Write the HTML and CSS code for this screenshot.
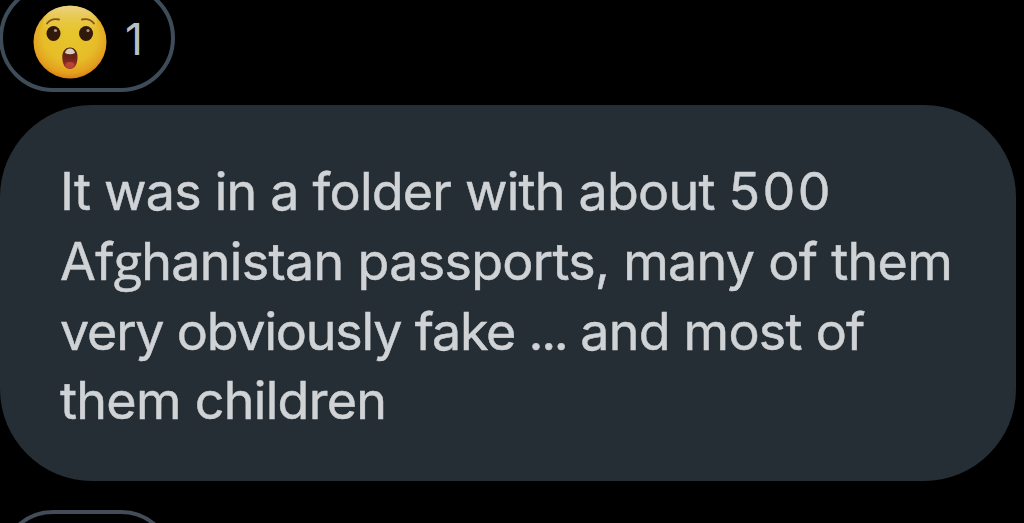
FILE: index.html
```
<!DOCTYPE html>
<html lang="en">
<head>
  <meta charset="UTF-8" />
  <meta name="viewport" content="width=device-width, initial-scale=1.0"/>
  <title>Messages</title>
  <link rel="stylesheet" href="styles.css">
</head>
<body>
  <div class="thread">
    <div class="reaction">
      <svg class="emoji" viewBox="0 0 74 74">
        <defs>
          <radialGradient id="face" cx="50%" cy="40%" r="62%">
            <stop offset="0" stop-color="#e6c62c"/>
            <stop offset="0.6" stop-color="#e6bd28"/>
            <stop offset="0.85" stop-color="#e3a01f"/>
            <stop offset="1" stop-color="#d9780f"/>
          </radialGradient>
          <linearGradient id="shine" x1="0" y1="0" x2="0" y2="1">
            <stop offset="0" stop-color="#ecd592" stop-opacity="0.9"/>
            <stop offset="1" stop-color="#e6c62c" stop-opacity="0"/>
          </linearGradient>
          <linearGradient id="mouth" x1="0" y1="0" x2="0" y2="1">
            <stop offset="0" stop-color="#4a2110"/>
            <stop offset="0.5" stop-color="#6d2418"/>
            <stop offset="1" stop-color="#a8362a"/>
          </linearGradient>
        </defs>
        <circle cx="37" cy="37" r="36.5" fill="url(#face)"/>
        <ellipse cx="37" cy="17" rx="27" ry="16" fill="url(#shine)"/>
        <path d="M14 18.5Q18 13 26 14.500" fill="none" stroke="#80551a" stroke-width="1.8" stroke-linecap="round"/>
        <path d="M49 14.500Q57 13 61 18.500" fill="none" stroke="#80551a" stroke-width="1.8" stroke-linecap="round"/>
        <ellipse cx="20.500" cy="28.500" rx="7" ry="7.500" fill="#30190b"/>
        <ellipse cx="53" cy="28.500" rx="7" ry="7.500" fill="#30190b"/>
        <circle cx="22.500" cy="25.500" r="1.600" fill="#a99382"/>
        <circle cx="55" cy="25.500" r="1.600" fill="#a99382"/>
        <path d="M37 42.500C42 42.500 45 47 44.500 53C44.200 60 41.500 64 37 64S29.600 60 29.300 53C29 47 32 42.500 37 42.500Z" fill="url(#mouth)"/>
        <path d="M32 48Q33 43.500 37 43.500T42 48Q37 50.500 32 48Z" fill="#d8cdbd"/>
        <ellipse cx="37" cy="60" rx="4.500" ry="3" fill="#b84436"/>
      </svg>
      <span class="count">1</span>
    </div>

    <div class="bubble">
      <p class="line">It was in a folder with about <span class="num">500</span></p>
      <p class="line two">Af<span class="g">g</span>hanistan passports, many of them</p>
      <p class="line three">very obviously fake <span class="dots">...</span><span class="rest"> and most of</span></p>
      <p class="line four">them children</p>
    </div>

    <div class="reaction next"></div>
  </div>
</body>
</html>
```

FILE: styles.css
```
* {
  margin: 0;
  padding: 0;
  box-sizing: border-box;
}

body {
  background: #000;
  height: 523px;
  overflow: hidden;
  font-family: Inter, 'Liberation Sans', sans-serif;
}

.thread {
  display: flex;
  flex-direction: column;
  align-items: flex-start;
  height: 523px;
  overflow: hidden;
}

.reaction {
  display: flex;
  flex: none;
  align-items: center;
  width: 176px;
  height: 108px;
  margin: -16px 0 0 -1px;
  padding-left: 30px;
  border: 4px solid #3e4c5a;
  border-radius: 54px;
}

.emoji {
  width: 74px;
  height: 74px;
  margin-top: 8px;
  flex: none;
}

.count {
  font-size: 44px;
  line-height: 50px;
  margin: 2px 0 0 18px;
  color: #b5c0c6;
}

.bubble {
  flex: none;
  width: 1016px;
  height: 376px;
  margin-top: 13px;
  padding: 52px 60px 0;
  border-radius: 92px;
  background: #252e35;
  color: #d0d3d6;
}

.line {
  font-size: 52px;
  line-height: 69.8px;
  letter-spacing: -0.78px;
  white-space: nowrap;
  -webkit-text-stroke: 0.5px #d0d3d6;
}

.two {
  letter-spacing: -0.7px;
}

.three {
  letter-spacing: -1.2px;
}

.four {
  letter-spacing: -0.7px;
}

.num {
  letter-spacing: 2.4px;
}

/* double-storey g */
.g {
  font-family: 'Open Sans', sans-serif;
  line-height: 1;
}

.dots {
  letter-spacing: -2.4px;
}

.rest {
  letter-spacing: -0.75px;
}

.next {
  margin-top: 29px;
  border-color: #434c57;
}
```
